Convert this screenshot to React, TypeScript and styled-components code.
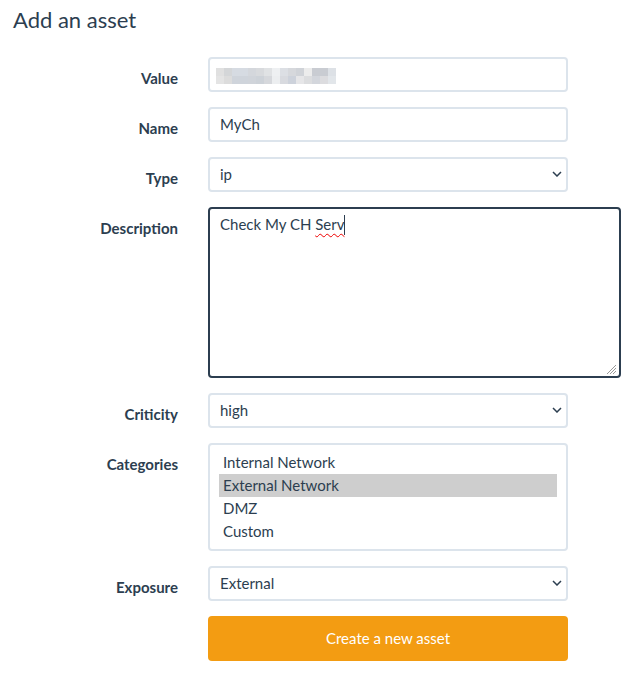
import React from "react";
import styled, { createGlobalStyle } from "styled-components";

const Global = createGlobalStyle`
  html, body { margin: 0; padding: 0; background: #fff; }
  body { font-family: Lato, "Open Sans", sans-serif; color: #2c3e50; }
  * { box-sizing: border-box; }
`;

const Page = styled.div`
  padding: 6px 0 0 0;
  width: 631px;
`;

const Title = styled.h2`
  margin: 0 0 24px 13px;
  font-size: 22px;
  font-weight: 400;
  line-height: 27px;
  color: #2c3e50;
`;

const Form = styled.form`
  display: grid;
  grid-template-columns: 178px 413px;
  column-gap: 30px;
  row-gap: 15px;
  margin: 0;
`;

const Label = styled.label`
  text-align: right;
  font-weight: 700;
  font-size: 15px;
  line-height: 21px;
  padding-top: 11px;
`;

const Control = styled.div<{ $wide?: boolean }>`
  position: relative;
  width: ${(p) => (p.$wide ? "413px" : "360px")};
`;

const Field = styled.div<{ $h?: number; $focus?: boolean }>`
  height: ${(p) => p.$h ?? 35}px;
  border: 2px solid ${(p) => (p.$focus ? "#2c3e50" : "#dce4ec")};
  border-radius: 4px;
  background: #fff;
  padding: 5px 10px;
  font-size: 15px;
  line-height: 21px;
  color: #2c3e50;
  display: flex;
  align-items: flex-start;
`;

const Chevron = styled.svg`
  position: absolute;
  right: 6px;
  top: 14px;
`;

const TextLine = styled.div`
  padding-top: 0;
  white-space: pre;
`;

const Misspelled = styled.span`
  text-decoration: underline wavy #e00;
  text-decoration-thickness: 1px;
  text-underline-offset: 3px;
  text-decoration-skip-ink: none;
`;

const Caret = styled.span`
  display: inline-block;
  width: 1px;
  height: 20px;
  background: #2c3e50;
  vertical-align: -5px;
`;

const Grip = styled.svg`
  position: absolute;
  right: 4px;
  bottom: 3px;
`;

const ListBox = styled.div`
  height: 108px;
  border: 2px solid #dce4ec;
  border-radius: 4px;
  padding: 6px 9px;
  background: #fff;
`;

const Option = styled.div<{ $selected?: boolean }>`
  height: 23px;
  line-height: 23px;
  padding-left: 4px;
  font-size: 15px;
  color: #2c3e50;
  background: ${(p) => (p.$selected ? "#cecece" : "transparent")};
`;

const Button = styled.button`
  grid-column: 2;
  width: 360px;
  height: 45px;
  border: none;
  border-radius: 4px;
  background: #f39c12;
  color: #fff;
  font-family: Lato, sans-serif;
  font-size: 15px;
  padding-bottom: 2px;
  cursor: pointer;
`;

const pixelsRow1 = ["#e0e0e0","#d4d6d8","#d6dbe2","#d6dbe2","#d4d7dc","#d8dadd","#e0e2e4","#eef0f2","#dcdfe4","#d6d8dc","#d0d3d8","#ececec","#c9ccd2","#c9ccd2","#dde1e6"];
const pixelsRow2 = ["#e4e4e4","#dcdcdc","#cfd4db","#cfd4db","#d0d4da","#cdd2d8","#d6d8dc","#eceef0","#d8dadf","#cdd2db","#e6e6e8","#dcdddf","#d3d6dc","#dcdcdf","#e2e6ea"];

const Blurred = () => (
  <svg width="120" height="16" style={{ marginTop: 4 }}>
    {pixelsRow1.map((c, i) => (
      <rect key={"a" + i} x={i * 8} y={0} width={8} height={8} fill={c} />
    ))}
    {pixelsRow2.map((c, i) => (
      <rect key={"b" + i} x={i * 8} y={8} width={8} height={8} fill={c} />
    ))}
  </svg>
);

const Arrow = () => (
  <Chevron width="10" height="6" viewBox="0 0 10 6">
    <path d="M1 1 L5 5 L9 1" fill="none" stroke="#2c3e50" strokeWidth="1.5" />
  </Chevron>
);

const Select = ({ value }: { value: string }) => (
  <Control>
    <Field>
      <TextLine>{value}</TextLine>
    </Field>
    <Arrow />
  </Control>
);

export default function App() {
  return (
    <>
      <Global />
      <Page>
        <Title>Add an asset</Title>
        <Form onSubmit={(e) => e.preventDefault()}>
          <Label>Value</Label>
          <Control>
            <Field style={{ paddingLeft: 6 }}>
              <Blurred />
            </Field>
          </Control>

          <Label>Name</Label>
          <Control>
            <Field>
              <TextLine>MyCh</TextLine>
            </Field>
          </Control>

          <Label>Type</Label>
          <Select value="ip" />

          <Label>Description</Label>
          <Control $wide>
            <Field $h={171} $focus>
              <TextLine>
                Check My CH <Misspelled>Serv</Misspelled>
                <Caret />
              </TextLine>
            </Field>
            <Grip width="12" height="12" viewBox="0 0 12 12">
              <path d="M11 2 L2 11 M11 5 L5 11 M11 8 L8 11" stroke="#999" strokeWidth="1" />
            </Grip>
          </Control>

          <Label>Criticity</Label>
          <Select value="high" />

          <Label>Categories</Label>
          <Control>
            <ListBox>
              <Option>Internal Network</Option>
              <Option $selected>External Network</Option>
              <Option>DMZ</Option>
              <Option>Custom</Option>
            </ListBox>
          </Control>

          <Label>Exposure</Label>
          <Select value="External" />

          <Button type="submit">Create a new asset</Button>
        </Form>
      </Page>
    </>
  );
}
